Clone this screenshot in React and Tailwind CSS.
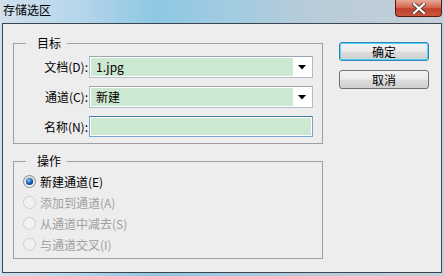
import React from 'react'

const FONT = { fontFamily: '"Noto Sans CJK SC", "Noto Sans", sans-serif' }

function Arrow() {
  return (
    <svg width="8" height="5" viewBox="0 0 8 5">
      <path d="M0 0 H8 L4 4.5 Z" fill="#000" />
    </svg>
  )
}

function Radio({ checked, disabled }) {
  if (checked) {
    return (
      <svg width="13" height="13" viewBox="0 0 13 13">
        <defs>
          <radialGradient id="dot" cx="0.4" cy="0.35" r="0.7">
            <stop offset="0" stopColor="#8fd0ff" />
            <stop offset="0.5" stopColor="#1f6fc0" />
            <stop offset="1" stopColor="#0d3d73" />
          </radialGradient>
          <linearGradient id="ring" x1="0" y1="0" x2="0" y2="1">
            <stop offset="0" stopColor="#d8d8d8" />
            <stop offset="1" stopColor="#f8f8f8" />
          </linearGradient>
        </defs>
        <circle cx="6.5" cy="6.5" r="6" fill="url(#ring)" stroke="#8a8a8a" />
        <circle cx="6.5" cy="6.5" r="3.6" fill="url(#dot)" />
      </svg>
    )
  }
  return (
    <svg width="13" height="13" viewBox="0 0 13 13">
      <circle cx="6.5" cy="6.5" r="6" fill={disabled ? '#f1f1f1' : '#fff'} stroke="#cfcfcf" />
    </svg>
  )
}

function Select({ value }) {
  return (
    <div className="flex h-[22px] w-[224px] border border-[#b4bcc6] border-t-[#9aa3ae] bg-white p-[1px]">
      <div className="flex flex-1 items-center bg-[#cde8d0] pl-[5px] text-[12px] text-black">{value}</div>
      <div className="flex w-[18px] items-center justify-center">
        <Arrow />
      </div>
    </div>
  )
}

function Row({ label, children }) {
  return (
    <div className="flex items-center">
      <div className="w-[74px] text-right text-[12px] text-black">{label}</div>
      <div className="ml-[1px]">{children}</div>
    </div>
  )
}

function Button({ children, primary }) {
  return (
    <div
      className={
        'flex h-[19px] w-[90px] items-center justify-center rounded-[3px] border text-[12px] text-black bg-[linear-gradient(#f4f4f4_0%,#ebebeb_48%,#dddddd_52%,#cfcfcf_100%)] ' +
        (primary ? 'border-[#3c7fb1] shadow-[inset_0_0_0_1px_#48d4fb]' : 'border-[#707070]')
      }
    >
      {children}
    </div>
  )
}

export default function App() {
  return (
    <div
      className="flex h-[276px] w-[444px] flex-col overflow-hidden bg-[linear-gradient(90deg,#d0e0ec_0%,#b5d6ea_18%,#8ec7e4_35%,#9fcbe2_50%,#b8ccd9_70%,#c4cfd8_100%)]"
      style={FONT}
    >
      {/* title bar */}
      <div className="flex h-[23px] items-start justify-between">
        <div className="pl-[3px] pt-[2px] text-[12px] leading-[16px] text-black">存储选区</div>
        <div className="mr-[2px] flex h-[17px] w-[47px] items-center justify-center rounded-b-[4px] border border-t-0 border-[#5c1a12] bg-[linear-gradient(#e8a896_0%,#d66a52_45%,#c0402a_55%,#c9563e_100%)]">
          <svg width="14" height="11" viewBox="0 0 14 11">
            <path d="M2 1 L12 10 M12 1 L2 10" stroke="#5a3a35" strokeWidth="4" strokeLinecap="square" />
            <path d="M2 1 L12 10 M12 1 L2 10" stroke="#fff" strokeWidth="2.2" strokeLinecap="square" />
          </svg>
        </div>
      </div>

      {/* client area */}
      <div className="mx-[2px] flex h-[250px] border border-[#3b4550] bg-[#ededed]">
        <div className="ml-[10px] flex w-[310px] flex-col">
          <fieldset className="mt-[11px] border border-[#a0a0a0] px-0 pb-[6px] pt-[5px]">
            <legend className="ml-[12px] pl-[11px] pr-[6px] text-[12px] leading-[16px] text-black">目标</legend>
            <div className="flex flex-col gap-[8px]">
              <Row label="文档(D):">
                <Select value="1.jpg" />
              </Row>
              <Row label="通道(C):">
                <Select value="新建" />
              </Row>
              <Row label="名称(N):">
                <div className="h-[21px] w-[224px] border border-[#7da2ce] border-t-[#3d7bad] bg-white p-[1px]">
                  <div className="h-full bg-[#cde8d0]" />
                </div>
              </Row>
            </div>
          </fieldset>

          <fieldset className="mt-[9px] border border-[#a0a0a0] px-0 pb-[3px] pt-[2px]">
            <legend className="ml-[12px] pl-[11px] pr-[6px] text-[12px] leading-[16px] text-black">操作</legend>
            <div className="flex flex-col">
              {[
                ['新建通道(E)', true],
                ['添加到通道(A)', false],
                ['从通道中减去(S)', false],
                ['与通道交叉(I)', false],
              ].map(([t, on]) => (
                <div key={t} className="flex h-[21px] items-center pl-[9px]">
                  <Radio checked={on} disabled={!on} />
                  <span className={'ml-[4px] text-[12px] ' + (on ? 'text-black' : 'text-[#a0a0a0]')}>{t}</span>
                </div>
              ))}
            </div>
          </fieldset>
        </div>

        <div className="ml-[16px] flex flex-col gap-[9px] pt-[18px]">
          <Button primary>确定</Button>
          <Button>取消</Button>
        </div>
      </div>
    </div>
  )
}
